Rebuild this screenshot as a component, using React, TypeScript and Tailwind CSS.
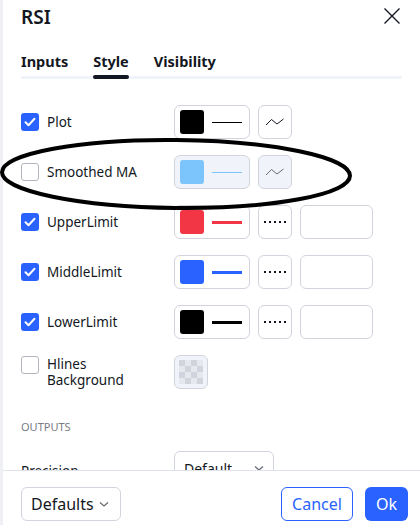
import { useState } from 'react';

type Row = {
  name: string;
  checked: boolean;
  color: string;
  thick: boolean;
  kind: 'wave' | 'dots';
  disabled?: boolean;
};

const rows: Row[] = [
  { name: 'Plot', checked: true, color: '#000000', thick: false, kind: 'wave' },
  { name: 'Smoothed MA', checked: false, color: '#7cc4fc', thick: false, kind: 'wave', disabled: true },
  { name: 'UpperLimit', checked: true, color: '#f23645', thick: true, kind: 'dots' },
  { name: 'MiddleLimit', checked: true, color: '#2962ff', thick: true, kind: 'dots' },
  { name: 'LowerLimit', checked: true, color: '#000000', thick: true, kind: 'dots' },
];

const Check = ({ on }: { on: boolean }) =>
  on ? (
    <span className="flex h-[18px] w-[18px] shrink-0 items-center justify-center rounded-[3px] bg-[#2962ff]">
      <svg width="12" height="10" viewBox="0 0 12 10" fill="none">
        <path d="M1.5 5.2 4.5 8.2 10.5 1.8" stroke="#fff" strokeWidth="2" strokeLinecap="round" strokeLinejoin="round" />
      </svg>
    </span>
  ) : (
    <span className="h-[18px] w-[18px] shrink-0 rounded-[3px] border border-[#b2b5be] bg-white" />
  );

const Wave = ({ color }: { color: string }) => (
  <svg width="20" height="10" viewBox="0 0 20 10" fill="none">
    <path d="M1 8 6.5 2.5 12 7 18.5 2" stroke={color} strokeWidth="1" />
  </svg>
);

const Dots = () => (
  <span className="flex gap-[3px]">
    {[0, 1, 2, 3, 4].map((i) => (
      <span key={i} className="h-[2px] w-[2px] bg-[#131722]" />
    ))}
  </span>
);

const Chevron = () => (
  <svg width="12" height="8" viewBox="0 0 12 8" fill="none">
    <path d="M2 2.5 6 6 10 2.5" stroke="#6a6d78" strokeWidth="1.3" />
  </svg>
);

export default function App() {
  const [tab, setTab] = useState('Style');

  return (
    <div className="flex h-[525px] w-[420px] overflow-hidden bg-white text-[#131722]" style={{ fontFamily: '"Noto Sans", sans-serif' }}>
      <div className="w-[3px] shrink-0 bg-[#eef0f3]" />
      <div className="relative flex min-w-0 flex-1 flex-col">
        {/* header */}
        <div className="flex items-start justify-between pl-[18px] pr-[19px] pt-[3px]">
          <div className="text-[19px] font-semibold leading-[28px]">RSI</div>
          <button className="mt-[4px]">
            <svg width="18" height="18" viewBox="0 0 18 18" fill="none">
              <path d="M1.5 1.5 16.5 16.5M16.5 1.5 1.5 16.5" stroke="#131722" strokeWidth="1.4" />
            </svg>
          </button>
        </div>

        {/* tabs */}
        <div className="mx-[18px] mt-[20px] flex gap-[25px] border-b-[3px] border-[#f0f3fa]">
          {['Inputs', 'Style', 'Visibility'].map((t) => (
            <button
              key={t}
              onClick={() => setTab(t)}
              className="relative pb-[5px] text-[14.5px] font-bold leading-[20px]"
            >
              {t}
              {tab === t && <span className="absolute -bottom-[3px] left-0 right-0 h-[4px] rounded-full bg-[#131722]" />}
            </button>
          ))}
        </div>

        {/* content */}
        <div className="flex-1 overflow-hidden pt-[18px]">
          {rows.map((r) => (
            <div key={r.name} className="flex h-[50px] items-center pl-[18px]">
              <div className="flex w-[153px] items-center gap-[8px]">
                <Check on={r.checked} />
                <span className="text-[13.5px] leading-[18px]">{r.name}</span>
              </div>
              <div
                className={`flex h-[34px] w-[76px] items-center gap-[8px] rounded-[6px] border border-[#d1d4dc] px-[5px] ${r.disabled ? 'bg-[#f0f3fa]' : 'bg-white'}`}
              >
                <span className="h-[24px] w-[24px] rounded-[3px]" style={{ backgroundColor: r.color }} />
                <span className="w-[30px]" style={{ height: r.thick ? 3 : 1, backgroundColor: r.color }} />
              </div>
              <div
                className={`ml-[8px] flex h-[34px] w-[34px] items-center justify-center rounded-[6px] border border-[#d1d4dc] ${r.disabled ? 'bg-[#f0f3fa]' : 'bg-white'}`}
              >
                {r.kind === 'wave' ? <Wave color={r.disabled ? '#6a6d78' : '#131722'} /> : <Dots />}
              </div>
              {r.kind === 'dots' && (
                <div className="ml-[8px] h-[34px] w-[73px] rounded-[6px] border border-[#d1d4dc] bg-white" />
              )}
            </div>
          ))}

          <div className="flex h-[50px] items-center pl-[18px]">
            <div className="flex w-[153px] items-start gap-[8px]">
              <Check on={false} />
              <div className="flex flex-col text-[13.5px] leading-[16px]">
                <span>Hlines</span>
                <span>Background</span>
              </div>
            </div>
            <div className="flex h-[34px] w-[34px] items-center justify-center rounded-[6px] border border-[#d1d4dc] bg-[#f0f3fa]">
              <div className="grid grid-cols-4">
                {Array.from({ length: 16 }).map((_, i) => (
                  <span
                    key={i}
                    className={`h-[6px] w-[6px] ${(Math.floor(i / 4) + i) % 2 === 0 ? 'bg-[#d1d4dc]' : 'bg-[#e6e8ee]'}`}
                  />
                ))}
              </div>
            </div>
          </div>

          <div className="mt-[22px] pl-[18px] text-[11px] leading-[16px] text-[#787b86]">OUTPUTS</div>

          <div className="mt-[16px] flex items-center pl-[18px]">
            <div className="w-[153px] pt-[6px] text-[13.5px]">Precision</div>
            <div className="flex h-[34px] w-[100px] items-center justify-between rounded-[6px] border border-[#d1d4dc] pl-[9px] pr-[8px] text-[14px]">
              Default
              <Chevron />
            </div>
          </div>
        </div>

        {/* footer */}
        <div className="flex h-[55px] shrink-0 items-start justify-between border-t border-[#e0e3eb] bg-white pl-[18px] pr-[12px] pt-[16px]">
          <div className="flex h-[34px] w-[100px] items-center justify-between rounded-[6px] border border-[#d1d4dc] pl-[9px] pr-[10px] text-[16px]">
            Defaults
            <Chevron />
          </div>
          <div className="flex gap-[12px]">
            <button className="h-[34px] w-[72px] rounded-[6px] border border-[#2962ff] text-[16px] text-[#2962ff]">Cancel</button>
            <button className="h-[34px] w-[43px] rounded-[6px] bg-[#2962ff] text-[16px] text-white">Ok</button>
          </div>
        </div>

        {/* hand-drawn annotation */}
        <svg className="pointer-events-none absolute left-[-3px] top-0" width="420" height="525" viewBox="0 0 420 525" fill="none">
          <ellipse cx="176" cy="174" rx="174" ry="34" stroke="#000" strokeWidth="4" transform="rotate(0.6 176 174)" />
        </svg>
      </div>
    </div>
  );
}
